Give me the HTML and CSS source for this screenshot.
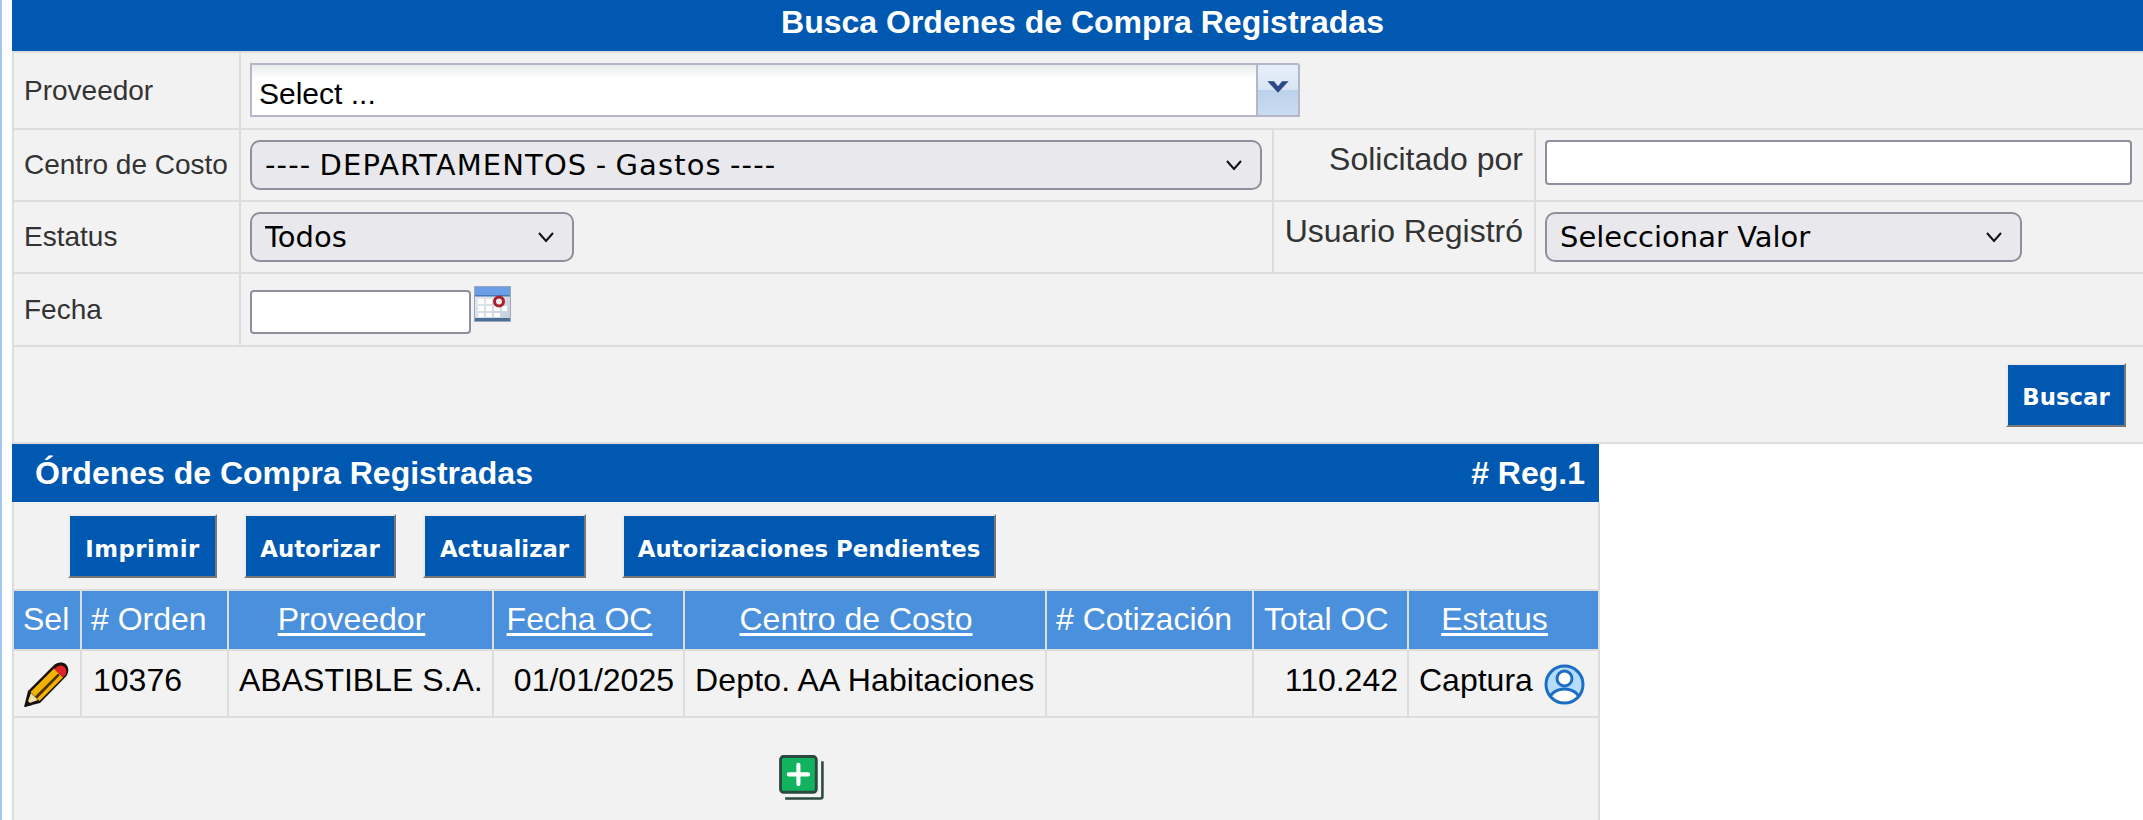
FILE: index.html
```html
<!DOCTYPE html>
<html lang="es">
<head>
<meta charset="utf-8">
<title>Busca Ordenes de Compra Registradas</title>
<link rel="stylesheet" href="styles.css">
</head>
<body>
<div class="page">
  <div class="main-title">Busca Ordenes de Compra Registradas</div>
  <table class="form-table">
    <colgroup><col class="c-label"><col class="c-control"><col class="c-label2"><col class="c-control2"></colgroup>
    <tbody>
      <tr class="r1">
        <td class="label">Proveedor</td>
        <td colspan="3" class="control">
          <div class="combo">
            <input class="combo-input" type="text" value="Select ...">
            <span class="combo-btn">
              <svg width="26" height="16" viewBox="0 0 26 16"><path d="M2 2h7l4 5 4-5h7L13 14z" fill="#2b4a86" stroke="#fff" stroke-opacity=".5" stroke-width=".6"/></svg>
            </span>
          </div>
        </td>
      </tr>
      <tr class="r2">
        <td class="label">Centro de Costo</td>
        <td class="control"><select class="sel sel-centro"><option>---- DEPARTAMENTOS - Gastos ----</option></select></td>
        <td class="label label-right">Solicitado por</td>
        <td class="control2"><input class="txt txt-sol" type="text"></td>
      </tr>
      <tr class="r3">
        <td class="label">Estatus</td>
        <td class="control"><select class="sel sel-estatus"><option>Todos</option></select></td>
        <td class="label label-right">Usuario Registró</td>
        <td class="control2"><select class="sel sel-usuario"><option>Seleccionar Valor</option></select></td>
      </tr>
      <tr class="r4">
        <td class="label">Fecha</td>
        <td colspan="3" class="control vtop">
          <div class="date-wrap">
            <input class="txt txt-fecha" type="text">
            <svg class="cal" width="37" height="36" viewBox="0 0 37 36">
              <defs><linearGradient id="calbg" x1="0" y1="0" x2="1" y2="1"><stop offset="0" stop-color="#eceef2"/><stop offset="1" stop-color="#c3ccd8"/></linearGradient></defs>
              <rect x="0.5" y="0.5" width="36" height="35" fill="url(#calbg)" stroke="#9aa9bd"/>
              <rect x="1" y="1" width="35" height="8" fill="#6a9fe6"/>
              <rect x="1" y="9" width="35" height="1.500" fill="#4a79b8"/>
              <g fill="#fff">
                <rect x="4" y="13" width="6" height="5"/><rect x="12" y="13" width="6" height="5"/>
                <rect x="4" y="20" width="6" height="5"/><rect x="12" y="20" width="6" height="5"/><rect x="20" y="20" width="6" height="5"/><rect x="28" y="20" width="5" height="5"/>
                <rect x="4" y="27" width="6" height="4"/><rect x="12" y="27" width="6" height="4"/><rect x="20" y="27" width="6" height="4"/>
              </g>
              <circle cx="25" cy="15.500" r="4.500" fill="#f2e9e9" stroke="#a8222c" stroke-width="3"/>
              <rect x="1" y="32" width="35" height="3" fill="#4e6f96"/>
            </svg>
          </div>
        </td>
      </tr>
      <tr class="r5">
        <td colspan="4" class="actions"><button class="btn" type="button">Buscar</button></td>
      </tr>
    </tbody>
  </table>

  <div class="grid-wrap">
    <div class="grid-title"><span>Órdenes de Compra Registradas</span><span># Reg.1</span></div>
    <table class="grid">
      <colgroup><col class="g1"><col class="g2"><col class="g3"><col class="g4"><col class="g5"><col class="g6"><col class="g7"><col class="g8"></colgroup>
      <tbody>
        <tr class="g-tools">
          <td colspan="8">
            <div class="toolbar">
              <button class="btn btn-imprimir" type="button">Imprimir</button>
              <button class="btn btn-autorizar" type="button">Autorizar</button>
              <button class="btn btn-actualizar" type="button">Actualizar</button>
              <button class="btn btn-pendientes" type="button">Autorizaciones Pendientes</button>
            </div>
          </td>
        </tr>
        <tr class="g-head">
          <th class="th-left">Sel</th>
          <th class="th-left"># Orden</th>
          <th><a href="#">Proveedor</a></th>
          <th><a href="#">Fecha OC</a></th>
          <th><a href="#">Centro de Costo</a></th>
          <th class="th-left"># Cotización</th>
          <th class="th-left th-total">Total OC</th>
          <th><a href="#">Estatus</a></th>
        </tr>
        <tr class="g-row">
          <td class="cell-icon">
            <svg width="46" height="46" viewBox="0 0 46 46">
              <path d="M0 45L4 29 30 3c3-3 9-3.500 12-.5s3 8 0 12L16 41z" fill="#17110a"/>
              <path d="M6.500 30L30 6.500 39 15.500 15.500 39z" fill="#f2b200"/>
              <path d="M11 34.500L34 11.500l1.800 1.800L13 36.500z" fill="#4a3000"/>
              <path d="M7 31l-4 11 11-4z" fill="#f1dfa6"/>
              <path d="M1 45l2-7 5 5z" fill="#17110a"/>
              <path d="M31.500 6c2.500-3 6.500-3.500 9-1s2.500 6 .5 8.500l-2 1.500-9-8z" fill="#e2252b"/>
            </svg>
          </td>
          <td class="cell-orden">10376</td>
          <td>ABASTIBLE S.A.</td>
          <td class="right">01/01/2025</td>
          <td class="cell-centro">Depto. AA Habitaciones</td>
          <td></td>
          <td class="right">110.242</td>
          <td class="cell-status">
            <div class="status-wrap">
              <span>Captura</span>
              <svg width="41" height="41" viewBox="0 0 41 41">
                <defs><clipPath id="circ"><circle cx="20.500" cy="20.500" r="18"/></clipPath></defs>
                <circle cx="20.500" cy="20.500" r="18.500" fill="#b5dcfa"/>
                <g clip-path="url(#circ)">
                  <ellipse cx="20.500" cy="36" rx="15" ry="11" fill="#fff" stroke="#1d6ec2" stroke-width="3"/>
                </g>
                <circle cx="20.500" cy="14.500" r="7.500" fill="#fff" stroke="#1d6ec2" stroke-width="3"/>
                <circle cx="20.500" cy="20.500" r="18.500" fill="none" stroke="#1d6ec2" stroke-width="3"/>
              </svg>
            </div>
          </td>
        </tr>
        <tr class="g-foot">
          <td colspan="8">
            <svg class="plus" width="47" height="47" viewBox="0 0 46 46">
              <path d="M42.500 6V40.500a2 2 0 0 1-2 2H6" fill="none" stroke="#2a4a40" stroke-width="2.500"/>
              <rect x="1.500" y="1.500" width="35" height="35" rx="3" fill="#12b35f" stroke="#2a4a40" stroke-width="2.800"/>
              <path d="M19 9.500v19M9.500 19h19" stroke="#fff" stroke-width="4" stroke-linecap="round"/>
            </svg>
          </td>
        </tr>
      </tbody>
    </table>
  </div>
</div>
</body>
</html>
```
FILE: styles.css
```css
* { box-sizing: border-box; }
html, body { margin: 0; padding: 0; background: #fff; }
body { height: 820px; overflow: hidden; font-family: "Liberation Sans", Arial, sans-serif; }
.page { border-left: 2px solid #a4c6f2; padding-left: 10px; height: 820px; overflow: hidden; }

.main-title { background: #0058b0; color: #fff; font-weight: bold; font-size: 32px; height: 51px; line-height: 44px; text-align: center; padding-left: 10px; }

table { border-collapse: collapse; table-layout: fixed; }
.form-table { width: 2131px; background: #f2f2f2; }
.c-label { width: 227px; }
.c-control { width: 1033px; }
.c-label2 { width: 262px; }
.c-control2 { width: 609px; }
.form-table td { border: 2px solid #ddd; padding: 0; }
.r1 td { height: 77px; }
.r2 td, .r3 td { height: 72px; }
.r4 td { height: 73px; }
.r5 td { height: 97px; }

.form-table .label { font-size: 28px; color: #333; padding-left: 10px; }
.form-table .label-right { font-size: 32px; text-align: right; padding: 0 11px 12px 0; }
.form-table .control, .form-table .control2 { padding-left: 9px; }
.form-table .vtop { vertical-align: top; }

.combo { display: flex; width: 1050px; height: 54px; margin-top: -1px; }
.combo-input { width: 1008px; height: 54px; border: 2px solid #b5b6ca; background: linear-gradient(#e9eded 0, #fff 14px); font: 30px "Liberation Sans", Arial, sans-serif; color: #000; padding: 8px 7px 0; outline: none; border-radius: 0; }
.combo-btn { width: 42px; height: 54px; border: 2px solid #b5b6ca; border-left: 0; border-radius: 0 3px 0 0; background: linear-gradient(#e7effa 0, #d9e5f4 50%, #bcd2ea 50%, #c9dbef 100%); display: flex; justify-content: center; padding-top: 14px; }
.combo-btn svg { display: block; }

.sel { appearance: none; -webkit-appearance: none; display: block; height: 50px; border: 2px solid #8f8f9d; border-radius: 10px; background-color: #e9e9ed; background-image: url("data:image/svg+xml,%3Csvg xmlns='http://www.w3.org/2000/svg' width='18' height='12' viewBox='0 0 18 12'%3E%3Cpath d='M2 2l7 8 7-8' fill='none' stroke='%23111' stroke-width='2'/%3E%3C/svg%3E"); background-repeat: no-repeat; background-position: right 17px center; font-family: "DejaVu Sans", sans-serif; font-size: 29px; color: #000; padding: 0 30px 0 13px; outline: none; }
.sel-centro { width: 1012px; letter-spacing: 1.1px; word-spacing: -2px; }
.sel-estatus { width: 324px; }
.sel-usuario { width: 477px; }

.txt { display: block; background: #fff; border: 2px solid #8f8f9d; border-radius: 4px; outline: none; padding: 0 6px; }
.txt-sol { width: 587px; height: 45px; margin-bottom: 5px; }
.txt-fecha { width: 221px; height: 44px; margin-top: 16px; }
.date-wrap { display: flex; align-items: flex-start; gap: 3px; }
.cal { display: block; margin-top: 12px; }

.actions { text-align: right; padding: 0 17px 0 0 !important; }
.btn { display: inline-block; height: 64px; background: #0058b0; color: #fff; border: 2px solid; border-color: #ececec #777 #777 #ececec; font-family: "DejaVu Sans", sans-serif; font-weight: bold; font-size: 22.8px; padding: 5px 0 0; margin: 0; white-space: nowrap; }
.actions .btn { width: 120px; vertical-align: middle; }

.grid-wrap { width: 1587px; }
.grid-title { display: flex; justify-content: space-between; background: #0058b0; color: #fff; font-weight: bold; font-size: 32px; height: 58px; line-height: 58px; padding: 0 14px 0 23px; }
.grid { width: 1586px; background: #f2f2f2; }
.g1 { width: 68px; } .g2 { width: 147px; } .g3 { width: 265px; } .g4 { width: 191px; }
.g5 { width: 362px; } .g6 { width: 207px; } .g7 { width: 155px; } .g8 { width: 191px; }
.grid td, .grid th { border: 2px solid #ddd; padding: 0; }
.g-tools td { height: 88px; border-top: 0; vertical-align: middle; }
.toolbar { display: flex; gap: 27px; padding-left: 54px; margin-top: 1px; }
.btn-imprimir { width: 149px; letter-spacing: .5px; }
.btn-autorizar { width: 152px; }
.btn-actualizar { width: 163px; }
.btn-pendientes { width: 374px; margin-left: 9px; }

.g-head th { height: 60px; background: #4a90dd; color: #fff; font-weight: normal; font-size: 32px; text-align: center; white-space: nowrap; padding-bottom: 2px; }
.g-head th.th-left { text-align: left; padding-left: 9px; }
.g-head th.th-total { padding-left: 10px; }
.g-head a { color: #fff; text-decoration: underline; text-underline-offset: 3px; margin-right: 18px; }
.g-row td { height: 67px; font-size: 32px; color: #000; padding: 0 10px 7px; white-space: nowrap; }
.g-row td.right { text-align: right; padding-right: 9px; }
.g-row td.cell-icon { padding: 2px 0 0 10px; }
.g-row td.cell-orden { padding-left: 11px; }
.g-row td.cell-centro { letter-spacing: .15px; }
.cell-icon svg { display: block; }
.g-row td.cell-status { padding: 0 0 0 10px; }
.status-wrap { display: flex; align-items: center; gap: 11px; }
.status-wrap span { margin-top: -6px; }
.status-wrap svg { display: block; margin-top: 1px; }
.g-foot td { height: 110px; text-align: center; vertical-align: top; padding-top: 37px; padding-right: 8px; }
.plus { display: inline-block; }
```
